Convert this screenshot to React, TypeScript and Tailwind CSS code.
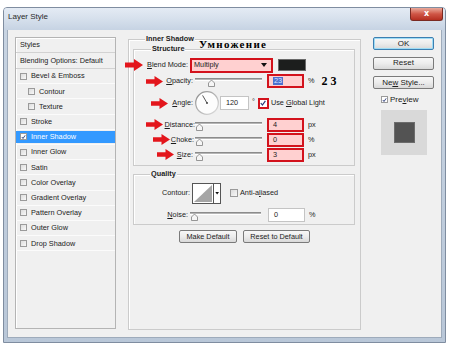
import React from "react";

const Arrow = ({ big }: { big?: boolean }) => (
  <svg width={big ? 18 : 17} height={big ? 12 : 11} viewBox="0 0 18 11" className="shrink-0" preserveAspectRatio="none">
    <polygon points="0,3.2 9,3.2 9,0 18,5.5 9,11 9,7.8 0,7.8" fill="#e3161c" />
  </svg>
);

const Slider = ({ thumb, width = 67 }: { thumb: number; width?: number }) => (
  <svg width={width} height={12} className="shrink-0">
    <rect x={0} y={2} width={width} height={1} fill="#8c8c8c" />
    <rect x={0} y={3} width={width} height={1} fill="#b5b5b5" />
    <rect x={0} y={4} width={width} height={1} fill="#ffffff" />
    <polygon
      points={`${thumb + 0.5},10.5 ${thumb + 0.5},7 ${thumb + 3.5},4 ${thumb + 6.5},7 ${thumb + 6.5},10.5`}
      fill="#f6f6f6"
      stroke="#7d7d7d"
      strokeWidth={0.8}
    />
  </svg>
);

const RedInput = ({ children }: { children: React.ReactNode }) => (
  <div className="w-[37px] h-[14px] shrink-0 bg-[#ffd0d0] border-2 border-[#d3121c] flex items-center pl-[4px] leading-none">
    {children}
  </div>
);

const WhiteInput = ({ children, w }: { children: React.ReactNode; w: string }) => (
  <div className={`${w} h-[14px] shrink-0 bg-white border border-[#c4c4c4] flex items-center pl-[5px] leading-none`}>
    {children}
  </div>
);

const Check = ({ checked, light }: { checked?: boolean; light?: boolean }) => (
  <div
    className={`w-[7px] h-[7px] shrink-0 border border-[#9a9a9a] flex items-center justify-center ${
      light ? "bg-white" : "bg-linear-to-br from-[#dcdcdc] to-[#f8f8f8]"
    }`}
  >
    {checked && (
      <svg width={6} height={6} viewBox="0 0 6 6">
        <polyline points="1,3 2.4,4.8 5,1" fill="none" stroke="#2a3a7a" strokeWidth={1.1} />
      </svg>
    )}
  </div>
);

const Label = ({ u, rest, pre = "" }: { u: string; rest: string; pre?: string }) => (
  <span className="whitespace-nowrap leading-none">
    {pre}
    <span className="underline underline-offset-1">{u}</span>
    {rest}
  </span>
);

const styleItems: { label: string; indent?: boolean; checked?: boolean; selected?: boolean }[] = [
  { label: "Bevel & Emboss" },
  { label: "Contour", indent: true },
  { label: "Texture", indent: true },
  { label: "Stroke" },
  { label: "Inner Shadow", checked: true, selected: true },
  { label: "Inner Glow" },
  { label: "Satin" },
  { label: "Color Overlay" },
  { label: "Gradient Overlay" },
  { label: "Pattern Overlay" },
  { label: "Outer Glow" },
  { label: "Drop Shadow" },
];

const Btn = ({ children, w, ok }: { children: React.ReactNode; w: string; ok?: boolean }) => (
  <div
    className={`${w} h-[13px] shrink-0 rounded-[2px] border flex items-center justify-center leading-none bg-linear-to-b from-[#f7f7f7] via-[#ececec] to-[#d9d9d9] ${
      ok ? "border-[#3c7fb1] shadow-[inset_0_0_0_1px_#9fdcf5]" : "border-[#7a7a7a]"
    }`}
  >
    {children}
  </div>
);

export default function App() {
  return (
    <div className="w-[450px] h-[352px] bg-white pt-[7px] pl-[3px] font-['Liberation_Sans',Arial,sans-serif] text-[7.3px] text-[#1c1c1c] overflow-hidden">
      <div className="w-[443px] h-[336px] border border-[#7f8da0] rounded-t-[4px] bg-linear-to-b from-[#c9d5e3] to-[#b9c7d8] flex flex-col">
        {/* Title bar */}
        <div className="h-[22px] shrink-0 flex justify-between items-start pl-[4px] rounded-t-[3px] bg-linear-to-b from-[#e4ebf4] via-[#d6e0ec] to-[#c6d3e3]">
          <span className="mt-[5px] text-[8px] leading-none text-[#2a2a2a]">Layer Style</span>
          <div className="w-[33px] h-[13px] mr-[2px] rounded-b-[3px] border border-t-0 border-[#7a2a22] bg-linear-to-b from-[#e8a99c] via-[#cf5546] to-[#b52e20] flex items-center justify-center">
            <span className="text-white font-bold text-[8px] leading-none font-['DejaVu_Sans',sans-serif]">x</span>
          </div>
        </div>
        {/* Content */}
        <div className="ml-[3px] w-[435px] h-[308px] shrink-0 bg-[#f0f0f0] border border-[#9eabbb] border-t-0 flex pl-[7px] pt-[7px]">
          {/* Left styles list */}
          <div className="w-[101px] h-[292px] shrink-0 border border-[#b4b4b4] shadow-[inset_1px_1px_0_#fff] bg-[#f0f0f0] flex flex-col">
            <div className="h-[15px] shrink-0 border-b border-[#d2d2d2] flex items-center pl-[4px] leading-none">Styles</div>
            <div className="h-[16px] shrink-0 border-b border-[#d2d2d2] flex items-center pl-[4px] leading-none">
              Blending Options: Default
            </div>
            {styleItems.map((it) => (
              <div key={it.label} className="h-[15.2px] shrink-0 border-b border-[#fbfbfb] flex items-stretch">
                <div
                  className={`flex-1 flex items-center gap-[4px] ${it.indent ? "pl-[12px]" : "pl-[4px]"} ${
                    it.selected ? "bg-[#3399ff] text-white my-[1px]" : ""
                  }`}
                >
                  <Check checked={it.checked} light={it.selected} />
                  <span className="leading-none whitespace-nowrap">{it.label}</span>
                </div>
              </div>
            ))}
          </div>

          {/* Middle group */}
          <div className="ml-[12px] mt-[2px] w-[233px] h-[291px] shrink-0 relative border border-[#cbcbcb] shadow-[inset_1px_1px_0_#fff] flex flex-col">
            <span className="absolute left-[16px] top-[-6px] px-[1px] bg-[#f0f0f0] font-bold leading-[9px]">Inner Shadow</span>
            <span className="absolute left-[70px] top-[-1px] font-['Liberation_Serif',serif] font-bold text-[11px] tracking-[1.3px] leading-[11px] text-black">
              Умножение
            </span>

            {/* Structure */}
            <div className="ml-[4px] mt-[9px] w-[222px] h-[117px] shrink-0 relative border border-[#cbcbcb] shadow-[inset_1px_1px_0_#fff] pt-[7px] flex flex-col">
              <span className="absolute left-[17px] top-[-6px] px-[1px] bg-[#f0f0f0] font-bold leading-[9px]">Structure</span>

              {/* Blend Mode */}
              <div className="h-[16px] flex items-center">
                <div className="w-[54px] shrink-0 flex justify-end items-center gap-[4px]">
                  <Arrow big />
                  <Label u="B" rest="lend Mode:" />
                </div>
                <div className="ml-[2px] w-[83px] h-[15px] shrink-0 bg-[#ffd0d0] border-2 border-[#d3121c] flex items-center justify-between pl-[2px] pr-[4px] leading-none">
                  <span>Multiply</span>
                  <svg width={6} height={4} viewBox="0 0 6 4">
                    <polygon points="0,0 6,0 3,4" fill="#111" />
                  </svg>
                </div>
                <div className="ml-[5px] w-[28px] h-[12px] shrink-0 bg-[#1c1e1d] border border-[#6a6a6a]" />
              </div>

              {/* Opacity */}
              <div className="h-[16px] flex items-center">
                <div className="w-[59px] shrink-0 flex justify-end items-center gap-[3px]">
                  <Arrow />
                  <Label u="O" rest="pacity:" />
                </div>
                <div className="ml-[2px] mt-[2px]">
                  <Slider thumb={13} />
                </div>
                <div className="ml-[5px]">
                  <RedInput>
                    <span className="bg-[#4c6fcf] text-[#dfe6ff] px-[1px]">23</span>
                  </RedInput>
                </div>
                <span className="ml-[4px] leading-none">%</span>
                <span className="ml-[7px] font-['Liberation_Serif',serif] font-bold text-[12px] tracking-[3px] leading-none text-black">
                  23
                </span>
              </div>

              {/* Angle */}
              <div className="h-[28px] flex items-center">
                <div className="w-[59px] shrink-0 flex justify-end items-center gap-[4px]">
                  <Arrow />
                  <Label u="A" rest="ngle:" />
                </div>
                <svg width={24} height={24} viewBox="0 0 24 24" className="ml-[2px] shrink-0">
                  <defs>
                    <linearGradient id="dg" x1="0" y1="0" x2="1" y2="1">
                      <stop offset="0" stopColor="#8a8a8a" />
                      <stop offset="1" stopColor="#e0e0e0" />
                    </linearGradient>
                  </defs>
                  <circle cx={12} cy={12} r={11.3} fill="#fdfdfd" stroke="url(#dg)" strokeWidth={1.2} />
                  <line x1={12} y1={12} x2={7.6} y2={4.4} stroke="#444" strokeWidth={0.9} />
                  <circle cx={12} cy={12} r={1} fill="#444" />
                </svg>
                <div className="ml-[1px]">
                  <WhiteInput w="w-[29px]">120</WhiteInput>
                </div>
                <span className="ml-[3px] leading-none mb-[3px]">°</span>
                <div className="ml-[3px] w-[11px] h-[11px] shrink-0 border-2 border-[#d3121c] bg-[#fff] flex items-center justify-center">
                  <svg width={6} height={6} viewBox="0 0 6 6">
                    <polyline points="0.8,3 2.4,5 5.4,0.8" fill="none" stroke="#2a3a7a" strokeWidth={1.2} />
                  </svg>
                </div>
                <span className="ml-[2px]">
                  <Label pre="Use " u="G" rest="lobal Light" />
                </span>
              </div>

              {/* Distance */}
              <div className="h-[15px] flex items-center">
                <div className="w-[61px] shrink-0 flex justify-end items-center gap-[2px]">
                  <Arrow />
                  <Label u="D" rest="istance:" />
                </div>
                <div className="mt-[2px]">
                  <Slider thumb={1} />
                </div>
                <div className="ml-[5px]">
                  <RedInput>4</RedInput>
                </div>
                <span className="ml-[4px] leading-none">px</span>
              </div>

              {/* Choke */}
              <div className="h-[15px] flex items-center">
                <div className="w-[60px] shrink-0 flex justify-end items-center gap-[1px]">
                  <Arrow />
                  <Label u="C" rest="hoke:" />
                </div>
                <div className="ml-[1px] mt-[2px]">
                  <Slider thumb={1} />
                </div>
                <div className="ml-[5px]">
                  <RedInput>0</RedInput>
                </div>
                <span className="ml-[4px] leading-none">%</span>
              </div>

              {/* Size */}
              <div className="h-[15px] flex items-center">
                <div className="w-[59px] shrink-0 flex justify-end items-center gap-[3px]">
                  <Arrow />
                  <Label u="S" rest="ize:" />
                </div>
                <div className="ml-[2px] mt-[2px]">
                  <Slider thumb={1} />
                </div>
                <div className="ml-[5px]">
                  <RedInput>3</RedInput>
                </div>
                <span className="ml-[4px] leading-none">px</span>
              </div>
            </div>

            {/* Quality */}
            <div className="ml-[4px] mt-[8px] w-[222px] h-[51px] shrink-0 relative border border-[#cbcbcb] shadow-[inset_1px_1px_0_#fff] pt-[8px] flex flex-col">
              <span className="absolute left-[16px] top-[-6px] px-[1px] bg-[#f0f0f0] font-bold leading-[9px]">Quality</span>
              <div className="h-[20px] flex items-center">
                <div className="w-[56px] shrink-0 flex justify-end">
                  <span className="leading-none">Contour:</span>
                </div>
                <svg width={29} height={21} viewBox="0 0 29 21" className="ml-[2px] shrink-0">
                  <rect x={0.5} y={0.5} width={28} height={20} fill="#fff" stroke="#555" />
                  <polygon points="2,19 20,2 20,19" fill="#a5a5a5" />
                  <line x1={21.5} y1={1} x2={21.5} y2={20} stroke="#555" />
                  <polygon points="23.3,9 27,9 25.15,11.5" fill="#111" />
                </svg>
                <div className="ml-[9px] w-[8px] h-[8px] shrink-0 border border-[#9a9a9a] bg-linear-to-br from-[#dcdcdc] to-[#f8f8f8]" />
                <span className="ml-[2px]">
                  <Label pre="Anti-a" u="l" rest="iased" />
                </span>
              </div>
              <div className="mt-[4px] h-[15px] flex items-center">
                <div className="w-[54px] shrink-0 flex justify-end">
                  <Label u="N" rest="oise:" />
                </div>
                <div className="ml-[2px] mt-[2px]">
                  <Slider thumb={1} width={71} />
                </div>
                <div className="ml-[7px]">
                  <WhiteInput w="w-[37px]">0</WhiteInput>
                </div>
                <span className="ml-[4px] leading-none">%</span>
              </div>
            </div>

            {/* Buttons */}
            <div className="ml-[50px] mt-[5px] flex gap-[6px]">
              <Btn w="w-[58px]">Make Default</Btn>
              <Btn w="w-[67px]">Reset to Default</Btn>
            </div>
          </div>

          {/* Right column */}
          <div className="ml-[12px] w-[61px] shrink-0 flex flex-col">
            <Btn w="w-[61px]" ok>
              <span className="text-[8px]">OK</span>
            </Btn>
            <div className="mt-[6.5px]">
              <Btn w="w-[61px]">
                <span className="text-[8px]">Reset</span>
              </Btn>
            </div>
            <div className="mt-[6.5px]">
              <Btn w="w-[61px]">
                <span className="text-[8px]">
                  <Label pre="Ne" u="w" rest=" Style..." />
                </span>
              </Btn>
            </div>
            <div className="mt-[6px] ml-[8px] h-[9px] flex items-center gap-[2px]">
              <Check checked light />
              <span className="text-[8px]">
                <Label pre="Pre" u="v" rest="iew" />
              </span>
            </div>
            <div className="mt-[6px] ml-[8px] w-[46px] h-[45px] bg-[#d9d9d9] flex items-center justify-center">
              <div className="w-[21px] h-[21px] bg-[#535353] border border-[#6c6c6c]" />
            </div>
          </div>
        </div>
      </div>
    </div>
  );
}
